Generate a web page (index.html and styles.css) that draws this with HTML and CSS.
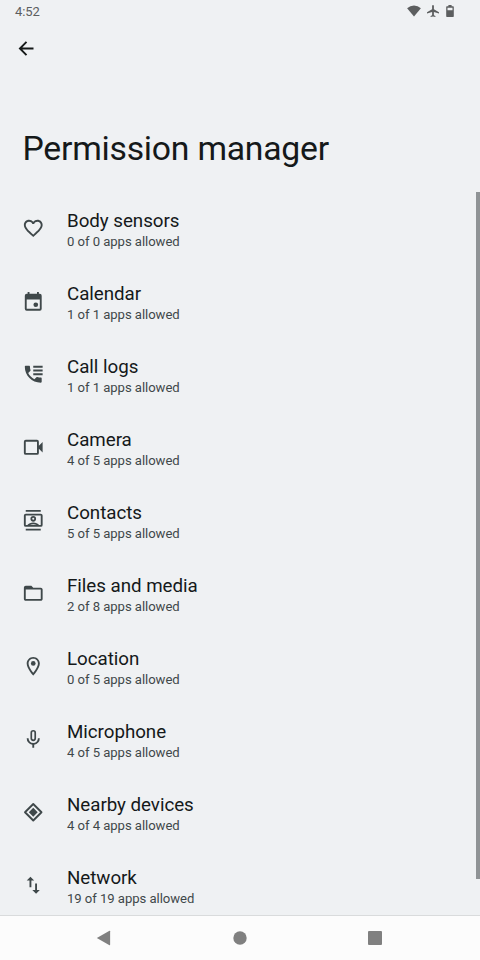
FILE: index.html
```html
<!DOCTYPE html>
<html lang="en">
<head>
<meta charset="utf-8">
<title>Permission manager</title>
<link rel="stylesheet" href="styles.css">
</head>
<body>
<div class="screen">
  <header class="status">
    <span class="clock">4:52</span>
    <div class="status-icons">
      <svg class="wifi" viewBox="0 0 14 12"><path d="M7 11.6L.1 3.200Q3.200.4 7 .4t6.900 2.800z"/></svg>
      <svg class="plane" viewBox="2 2 20 20"><path d="M22 16v-2l-8.500-5V3.500C13.500 2.670 12.830 2 12 2s-1.500.67-1.500 1.500V9L2 14v2l8.500-2.500V19L8 20.500V22l4-1 4 1v-1.500L13.500 19v-5.500L22 16z"/></svg>
      <svg class="battery" viewBox="0 0 8 12"><path fill-rule="evenodd" d="M2.400 0h3.200v1.200h1.500q.7 0 .7.700v9.400q0 .7-.7.700H.9q-.7 0-.7-.7V1.900q0-.7.7-.7h1.500zM1.500 2.700v2.500h5V2.700z"/></svg>
    </div>
  </header>
  <nav class="toolbar">
    <svg class="back" viewBox="0 0 24 24"><path d="M20 12H5M12 4.500L4.500 12l7.500 7.500"/></svg>
  </nav>
  <h1>Permission manager</h1>
  <main class="content">
    <ul class="list">
      <li class="row">
        <svg class="icon" viewBox="0 0 24 24"><path d="M16.500 3c-1.740 0-3.410.81-4.500 2.090C10.910 3.810 9.240 3 7.500 3 4.420 3 2 5.420 2 8.500c0 3.780 3.400 6.860 8.550 11.540L12 21.350l1.450-1.320C18.600 15.360 22 12.280 22 8.500 22 5.420 19.580 3 16.500 3zm-4.400 15.550l-.1.1-.1-.1C7.140 14.240 4 11.390 4 8.500 4 6.500 5.500 5 7.500 5c1.540 0 3.040.99 3.570 2.360h1.870C13.460 5.990 14.960 5 16.500 5c2 0 3.500 1.500 3.500 3.500 0 2.890-3.140 5.740-7.900 10.050z"/></svg>
        <div class="label"><span class="name">Body sensors</span><span class="summary">0 of 0 apps allowed</span></div>
      </li>
      <li class="row">
        <svg class="icon" viewBox="0 0 24 24"><path fill-rule="evenodd" d="M6 2h2v2h8V2h2v2h1q2 0 2 2v14q0 2-2 2H5q-2 0-2-2V6q0-2 2-2h1zM5 10v10h14V10z"/><circle cx="14.700" cy="15.700" r="2.500"/></svg>
        <div class="label"><span class="name">Calendar</span><span class="summary">1 of 1 apps allowed</span></div>
      </li>
      <li class="row">
        <svg class="icon" viewBox="0 0 24 24"><path d="M12 3h10v2H12zM12 7h10v2H12zM12 11h10v2H12zM20 15.500c-1.250 0-2.450-.2-3.570-.57-.35-.11-.74-.03-1.020.24l-2.200 2.200c-2.830-1.440-5.150-3.750-6.590-6.580l2.200-2.210c.28-.27.36-.66.25-1.010C8.700 6.450 8.500 5.250 8.500 4c0-.55-.45-1-1-1H4c-.55 0-1 .45-1 1 0 9.390 7.610 17 17 17 .55 0 1-.45 1-1v-3.500c0-.55-.45-1-1-1z"/></svg>
        <div class="label"><span class="name">Call logs</span><span class="summary">1 of 1 apps allowed</span></div>
      </li>
      <li class="row">
        <svg class="icon" viewBox="0 0 24 24"><path fill-rule="evenodd" d="M4 4h12q2 0 2 2v4.500l4-4v11l-4-4V18q0 2-2 2H4q-2 0-2-2V6q0-2 2-2zM4 6v12h12V6z"/></svg>
        <div class="label"><span class="name">Camera</span><span class="summary">4 of 5 apps allowed</span></div>
      </li>
      <li class="row">
        <svg class="icon" viewBox="0 0 24 24"><path fill-rule="evenodd" d="M4 1h16v2H4zM4 21h16v2H4zM4 5h16q2 0 2 2v10q0 2-2 2H4q-2 0-2-2V7q0-2 2-2zM4 7v10h1.700c1.300-1.700 3.700-2.700 6.300-2.700s5 1 6.300 2.700H20V7zM8.500 17h7c-1-.5-2.200-.8-3.500-.8s-2.500.3-3.500.8zM12 7.500a3 3 0 1 1 0 6 3 3 0 0 1 0-6zm0 1.900a1.100 1.100 0 1 0 0 2.200 1.100 1.100 0 0 0 0-2.200z"/></svg>
        <div class="label"><span class="name">Contacts</span><span class="summary">5 of 5 apps allowed</span></div>
      </li>
      <li class="row">
        <svg class="icon" viewBox="0 0 24 24"><path d="M20 6h-8l-2-2H4c-1.100 0-1.990.9-1.990 2L2 18c0 1.100.9 2 2 2h16c1.100 0 2-.9 2-2V8c0-1.100-.9-2-2-2zm0 12H4V8h16v10z"/></svg>
        <div class="label"><span class="name">Files and media</span><span class="summary">2 of 8 apps allowed</span></div>
      </li>
      <li class="row">
        <svg class="icon" viewBox="0 0 24 24"><path d="M12 2C8.130 2 5 5.130 5 9c0 5.250 7 13 7 13s7-7.750 7-13c0-3.870-3.130-7-7-7zM7 9c0-2.760 2.240-5 5-5s5 2.240 5 5c0 2.880-2.880 7.190-5 9.880C9.920 16.210 7 11.850 7 9z"/><circle cx="12" cy="9" r="2.500"/></svg>
        <div class="label"><span class="name">Location</span><span class="summary">0 of 5 apps allowed</span></div>
      </li>
      <li class="row">
        <svg class="icon" viewBox="0 0 24 24"><path fill-rule="evenodd" d="M12 2a3 3 0 0 1 3 3v6a3 3 0 0 1-6 0V5a3 3 0 0 1 3-3zm0 1.800A1.200 1.200 0 0 0 10.800 5v6a1.200 1.200 0 0 0 2.400 0V5A1.200 1.200 0 0 0 12 3.800zM5 11h2a5 5 0 0 0 10 0h2a7 7 0 0 1-6 6.920V21h-2v-3.080A7 7 0 0 1 5 11z"/></svg>
        <div class="label"><span class="name">Microphone</span><span class="summary">4 of 5 apps allowed</span></div>
      </li>
      <li class="row">
        <svg class="icon" viewBox="0 0 24 24"><path class="line" d="M12 3.200L20.800 12 12 20.800 3.200 12z"/><path d="M12 7.300l4.700 4.700-4.700 4.700L7.300 12z"/></svg>
        <div class="label"><span class="name">Nearby devices</span><span class="summary">4 of 4 apps allowed</span></div>
      </li>
      <li class="row">
        <svg class="icon" viewBox="0 0 24 24"><path d="M9 3L5 6.990h3V14h2V6.990h3L9 3zM16 17.010V10h-2v7.010h-3L15 21l4-3.990h-3z"/></svg>
        <div class="label"><span class="name">Network</span><span class="summary">19 of 19 apps allowed</span></div>
      </li>
    </ul>
    <div class="scrollbar"></div>
  </main>
  <footer class="navbar">
    <svg viewBox="0 0 16 16"><path d="M.8 8L13.500.8q.6-.3.600.4v13.600q0 .7-.6.400z"/></svg>
    <svg viewBox="0 0 16 16"><circle cx="8" cy="8" r="6.700"/></svg>
    <svg viewBox="0 0 16 16"><rect x="1" y="1" width="14" height="14" rx="1"/></svg>
  </footer>
</div>
</body>
</html>
```
FILE: styles.css
```css
* { box-sizing: border-box; }
body { margin: 0; font-family: Roboto, "Liberation Sans", sans-serif; }
svg { display: block; flex: none; }
.screen {
  width: 480px;
  height: 960px;
  display: flex;
  flex-direction: column;
  overflow: hidden;
  background: #eff1f3;
  color: #15191a;
}
.status {
  height: 23px;
  display: flex;
  justify-content: space-between;
  padding: 0 25px 0 15px;
  color: #5c5e5f;
}
.clock { font-size: 13px; line-height: 24px; letter-spacing: -0.1px; }
.status-icons { display: flex; align-items: flex-start; padding-top: 5px; fill: #5c5e5f; }
.wifi { width: 14px; height: 12px; margin-right: 6px; }
.plane { width: 12px; height: 12px; margin-right: 7.500px; }
.battery { width: 8px; height: 12px; margin-right: 0.750px; }
.toolbar { height: 51px; padding: 15px 16px; }
.back { width: 21px; height: 21px; fill: none; stroke: #151918; stroke-width: 2.200; }
h1 {
  margin: 0;
  height: 118px;
  padding: 55px 0 0 22.500px;
  font-size: 33.750px;
  line-height: 40px;
  font-weight: 400;
  letter-spacing: -0.24px;
}
.content { flex: 1; min-height: 0; display: flex; justify-content: space-between; overflow: hidden; }
.list { margin: 0; padding: 0; list-style: none; }
.row { height: 73px; display: flex; align-items: center; padding-left: 22px; gap: 22.500px; }
.icon { width: 22.500px; height: 22.500px; fill: #3f484a; }
.line { fill: none; stroke: #3f484a; stroke-width: 2; stroke-linejoin: round; }
.label { display: flex; flex-direction: column; padding-top: 3px; }
.name { font-size: 18.750px; line-height: 23px; letter-spacing: -0.04px; }
.summary { font-size: 13.125px; line-height: 18px; color: #3f484a; letter-spacing: -0.05px; }
.scrollbar { width: 4px; height: 687px; background: #8f9395; }
.navbar {
  height: 45px;
  display: flex;
  align-items: center;
  justify-content: space-between;
  padding: 0 97px 0 96px;
  background: #fcfcfc;
  border-top: 1px solid #d9dbdc;
}
.navbar svg { width: 16px; height: 16px; fill: #808080; }
```
